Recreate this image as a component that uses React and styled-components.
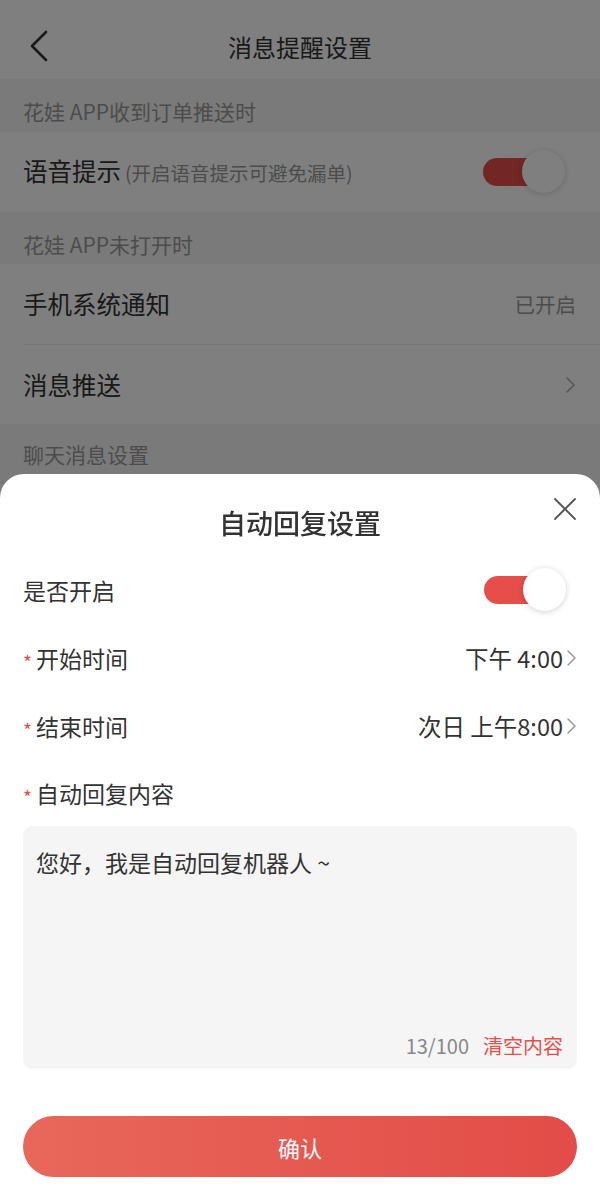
import React, { useState } from 'react';
import styled, { createGlobalStyle } from 'styled-components';

const GlobalStyle = createGlobalStyle`
  * { box-sizing: border-box; }
  html, body {
    margin: 0;
    padding: 0;
    height: 1190px;
    overflow: hidden;
    background: #fff;
    font-family: "Noto Sans CJK SC", "Noto Sans", sans-serif;
    color: #333;
  }
`;

const Page = styled.div`
  width: 600px;
  height: 1190px;
  background: #fff;
`;

const NavBar = styled.div`
  height: 79px;
  padding-top: 14px;
  display: flex;
  align-items: center;
  justify-content: center;
  position: relative;
  background: #fff;
`;

const BackButton = styled.div`
  position: absolute;
  left: 28px;
  top: 30px;
  width: 22px;
  height: 32px;
  display: flex;
`;

const NavTitle = styled.div`
  font-size: 24px;
  line-height: 34px;
  color: #333;
`;

const SectionHeader = styled.div`
  height: ${p => p.$h}px;
  padding: ${p => p.$top}px 23px 0;
  background: #f4f4f4;
  display: flex;
  align-items: flex-start;
  font-size: 21px;
  line-height: 26px;
  color: #999;
`;

const Group = styled.div`
  background: #fff;
`;

const Row = styled.div`
  height: 80px;
  margin-left: 23px;
  padding-right: 24px;
  display: flex;
  align-items: center;
  justify-content: space-between;
  border-top: ${p => (p.$divider ? '1px solid #eaeaea' : 'none')};
`;

const RowLabel = styled.div`
  font-size: 24.5px;
  line-height: 32px;
  color: #333;
  display: flex;
  align-items: baseline;
`;

const Hint = styled.span`
  font-size: 19.5px;
  color: #999;
  margin-left: 4px;
`;

const RowValue = styled.div`
  font-size: 20.5px;
  color: #999;
  display: flex;
  align-items: center;
`;

const Switch = styled.div`
  width: 82px;
  height: 44px;
  margin-right: 11px;
  position: relative;
  display: flex;
  align-items: center;
  cursor: pointer;
`;

const Track = styled.div`
  width: 70px;
  height: 28px;
  border-radius: 14px;
  background: ${p => (p.$on ? '#e64e4a' : '#e5e5e5')};
`;

const Knob = styled.div`
  position: absolute;
  top: 0;
  left: ${p => (p.$on ? '39px' : '0')};
  width: 43px;
  height: 43px;
  border-radius: 50%;
  background: #fff;
  box-shadow: 0 1px 6px rgba(0, 0, 0, 0.18);
`;

const Overlay = styled.div`
  position: fixed;
  inset: 0;
  background: rgba(0, 0, 0, 0.5);
`;

const Sheet = styled.div`
  position: fixed;
  left: 0;
  right: 0;
  bottom: 0;
  height: 716px;
  background: #fff;
  border-radius: 24px 24px 0 0;
  padding: 0 23px;
  display: flex;
  flex-direction: column;
`;

const SheetHeader = styled.div`
  height: 82px;
  padding-top: 30px;
  display: flex;
  justify-content: center;
  position: relative;
`;

const SheetTitle = styled.div`
  font-size: 27px;
  line-height: 38px;
  font-weight: 500;
  color: #333;
`;

const CloseButton = styled.div`
  position: absolute;
  right: 0;
  top: 23px;
  width: 24px;
  height: 24px;
  display: flex;
  cursor: pointer;
`;

const FormRow = styled.div`
  height: ${p => p.$h || 68}px;
  display: flex;
  align-items: center;
  justify-content: space-between;
`;

const FormLabel = styled.div`
  font-size: 23px;
  line-height: 30px;
  color: #333;
  display: flex;
  align-items: center;
`;

const Required = styled.span`
  color: #e5504b;
  font-size: 19px;
  width: 13px;
  margin-top: 8px;
`;

const FormValue = styled.div`
  font-size: 23.5px;
  line-height: 30px;
  color: #333;
  display: flex;
  align-items: center;
  gap: 3px;
`;

const TextBox = styled.div`
  height: 243px;
  border-radius: 9px;
  background: #f5f5f5;
  padding: 20px 14px 10px 13px;
  display: flex;
  flex-direction: column;
  justify-content: space-between;
`;

const TextContent = styled.div`
  font-size: 23px;
  line-height: 32px;
  color: #333;
`;

const Counter = styled.div`
  display: flex;
  justify-content: flex-end;
  align-items: center;
  gap: 14px;
  font-size: 20px;
  line-height: 26px;
`;

const Count = styled.span`
  color: #888;
`;

const ClearLink = styled.span`
  color: #e5504b;
  cursor: pointer;
`;

const ConfirmButton = styled.button`
  margin-top: 47px;
  height: 61px;
  width: 100%;
  border: none;
  border-radius: 31px;
  background: linear-gradient(90deg, #e8675b, #e34c48);
  color: #fff;
  font-family: inherit;
  font-size: 22px;
  cursor: pointer;
`;

const Chevron = ({ color = '#999', w = 11, h = 18 }) => (
  <svg width={w} height={h} viewBox="0 0 11 18" fill="none">
    <polyline points="2,2 9,9 2,16" stroke={color} strokeWidth="1.5" strokeLinecap="round" strokeLinejoin="round" />
  </svg>
);

const App = () => {
  const [voice, setVoice] = useState(true);
  const [autoReply, setAutoReply] = useState(true);
  const [text, setText] = useState('您好，我是自动回复机器人 ~');

  return (
    <>
      <GlobalStyle />
      <Page>
        <NavBar>
          <BackButton>
            <svg width="22" height="32" viewBox="0 0 22 32" fill="none">
              <polyline points="18,2 4,16 18,30" stroke="#333" strokeWidth="2.6" strokeLinecap="round" strokeLinejoin="round" />
            </svg>
          </BackButton>
          <NavTitle>消息提醒设置</NavTitle>
        </NavBar>

        <SectionHeader $h={53} $top={19}>花娃 APP收到订单推送时</SectionHeader>
        <Group>
          <Row>
            <RowLabel>
              语音提示<Hint>(开启语音提示可避免漏单)</Hint>
            </RowLabel>
            <Switch onClick={() => setVoice(!voice)}>
              <Track $on={voice} />
              <Knob $on={voice} />
            </Switch>
          </Row>
        </Group>

        <SectionHeader $h={52} $top={19}>花娃 APP未打开时</SectionHeader>
        <Group>
          <Row>
            <RowLabel>手机系统通知</RowLabel>
            <RowValue>已开启</RowValue>
          </Row>
          <Row $divider>
            <RowLabel>消息推送</RowLabel>
            <RowValue>
              <Chevron color="#aaa" />
            </RowValue>
          </Row>
        </Group>

        <SectionHeader $h={60} $top={17}>聊天消息设置</SectionHeader>
      </Page>

      <Overlay />

      <Sheet>
        <SheetHeader>
          <SheetTitle>自动回复设置</SheetTitle>
          <CloseButton>
            <svg width="24" height="24" viewBox="0 0 24 24" fill="none">
              <line x1="2" y1="2" x2="22" y2="22" stroke="#555" strokeWidth="1.8" strokeLinecap="round" />
              <line x1="22" y1="2" x2="2" y2="22" stroke="#555" strokeWidth="1.8" strokeLinecap="round" />
            </svg>
          </CloseButton>
        </SheetHeader>

        <FormRow>
          <FormLabel>是否开启</FormLabel>
          <Switch onClick={() => setAutoReply(!autoReply)}>
            <Track $on={autoReply} />
            <Knob $on={autoReply} />
          </Switch>
        </FormRow>
        <FormRow>
          <FormLabel>
            <Required>*</Required>开始时间
          </FormLabel>
          <FormValue>
            下午 4:00
            <Chevron />
          </FormValue>
        </FormRow>
        <FormRow>
          <FormLabel>
            <Required>*</Required>结束时间
          </FormLabel>
          <FormValue>
            次日 上午8:00
            <Chevron />
          </FormValue>
        </FormRow>
        <FormRow $h={66}>
          <FormLabel>
            <Required>*</Required>自动回复内容
          </FormLabel>
        </FormRow>

        <TextBox>
          <TextContent>{text}</TextContent>
          <Counter>
            <Count>13/100</Count>
            <ClearLink onClick={() => setText('')}>清空内容</ClearLink>
          </Counter>
        </TextBox>

        <ConfirmButton>确认</ConfirmButton>
      </Sheet>
    </>
  );
};

export default App;
